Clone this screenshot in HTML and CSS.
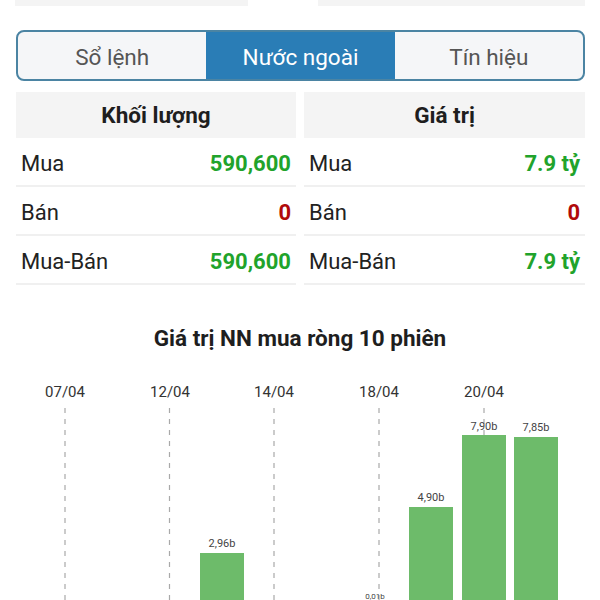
FILE: index.html
```html
<!DOCTYPE html>
<html lang="vi">

<head>
    <meta charset="UTF-8">
    <meta name="viewport" content="width=device-width, initial-scale=1.0">
    <link rel="stylesheet" href="styles.css">
    <title>Nước ngoài</title>
</head>

<body>
    <div class="top-strip">
        <span class="strip-left"></span>
        <span class="strip-right"></span>
    </div>

    <div class="tabs">
        <div class="tab">Sổ lệnh</div>
        <div class="tab active">Nước ngoài</div>
        <div class="tab">Tín hiệu</div>
    </div>

    <div class="stats">
        <div class="stat-col">
            <div class="stat-head">Khối lượng</div>
            <div class="stat-row"><span>Mua</span><b class="up">590,600</b></div>
            <div class="stat-row"><span>Bán</span><b class="down">0</b></div>
            <div class="stat-row"><span>Mua-Bán</span><b class="up">590,600</b></div>
        </div>
        <div class="stat-col">
            <div class="stat-head">Giá trị</div>
            <div class="stat-row"><span>Mua</span><b class="up">7.9 tỷ</b></div>
            <div class="stat-row"><span>Bán</span><b class="down">0</b></div>
            <div class="stat-row"><span>Mua-Bán</span><b class="up">7.9 tỷ</b></div>
        </div>
    </div>

    <h3 class="chart-title">Giá trị NN mua ròng 10 phiên</h3>

    <svg class="chart" width="600" height="240" viewBox="0 0 600 240">
        <!-- date grid -->
        <g class="grid">
            <line x1="65" y1="48" x2="65" y2="240" />
            <line x1="169.5" y1="48" x2="169.5" y2="240" />
            <line x1="274" y1="48" x2="274" y2="240" />
            <line x1="379" y1="48" x2="379" y2="240" />
            <line x1="484" y1="48" x2="484" y2="240" />
        </g>
        <g class="dates">
            <text x="65" y="37">07/04</text>
            <text x="170" y="37">12/04</text>
            <text x="274" y="37">14/04</text>
            <text x="379" y="37">18/04</text>
            <text x="484" y="37">20/04</text>
        </g>

        <!-- bars -->
        <g class="bars">
            <rect x="200" y="193" width="44" height="60" />
            <rect x="409" y="147" width="44" height="100" />
            <rect x="462" y="75" width="44" height="170" />
            <rect x="514" y="77" width="44" height="170" />
        </g>
        <g class="values">
            <text x="222" y="187">2,96b</text>
            <text x="431" y="141">4,90b</text>
            <text x="484" y="70">7,90b</text>
            <text x="536" y="71">7,85b</text>
            <text class="tiny" x="375" y="239">0,01b</text>
        </g>
    </svg>
</body>

</html>
```

FILE: styles.css
```css
* {
    margin: 0;
    padding: 0;
    box-sizing: border-box;
}

body {
    width: 600px;
    height: 600px;
    overflow: hidden;
    background-color: #fff;
    font-family: Roboto, 'Liberation Sans', sans-serif;
    color: #222;
}

.top-strip {
    display: flex;
    justify-content: space-between;
    padding: 0 15px;
    height: 6px;
    margin-bottom: 24px;
}

.top-strip span {
    background-color: #f4f4f4;
    height: 100%;
}

.strip-left {
    width: 233px;
}

.strip-right {
    width: 267px;
}

.tabs {
    display: grid;
    grid-template-columns: 1fr 1fr 1fr;
    margin: 0 15px 0 16px;
    height: 51px;
    border: 2px solid #4b84a3;
    border-radius: 8px;
    overflow: hidden;
    background-color: #f5f6f8;
}

.tab {
    display: flex;
    justify-content: center;
    align-items: center;
    padding-top: 2px;
    font-size: 22.5px;
    color: #555;
}

.tab.active {
    background-color: #2a7db6;
    color: #fff;
}

.stats {
    display: grid;
    grid-template-columns: 280px 281px;
    gap: 8px;
    margin: 11px 15px 0 16px;
}

.stat-head {
    height: 46px;
    background-color: #f4f4f4;
    display: flex;
    justify-content: center;
    align-items: center;
    font-size: 22.5px;
    font-weight: bold;
    color: #1e1e1e;
}

.stat-row {
    height: 49px;
    border-bottom: 2px solid #f0f0f0;
    display: flex;
    justify-content: space-between;
    align-items: center;
    padding: 4px 5px 0;
    font-size: 22px;
}

.stat-row b {
    font-weight: bold;
}

.up {
    color: #21a32b;
}

.down {
    color: #b00a0a;
}

.chart-title {
    margin-top: 40px;
    text-align: center;
    font-size: 22.5px;
    line-height: 26px;
    font-weight: bold;
    color: #1e1e1e;
}

.chart {
    display: block;
    margin-top: 9px;
}

.grid line {
    stroke: #a9a9a9;
    stroke-width: 1.2;
    stroke-dasharray: 5 6;
}

.dates text {
    font-size: 15px;
    fill: #333;
    text-anchor: middle;
}

.bars rect {
    fill: #6dbb6a;
}

.values text {
    font-size: 11px;
    fill: #444;
    text-anchor: middle;
}

.values .tiny {
    font-size: 8px;
}
```
